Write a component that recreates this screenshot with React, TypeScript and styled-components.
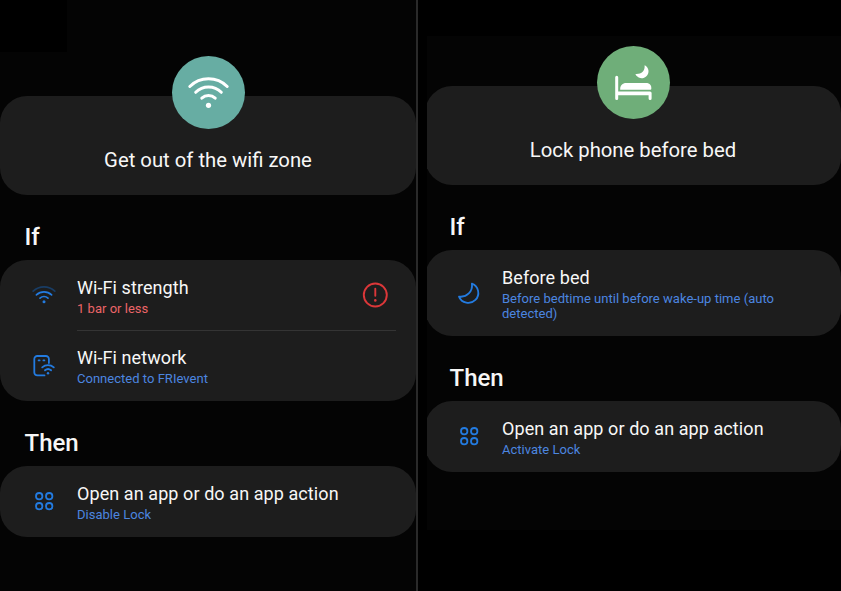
import React from "react";
import styled, { createGlobalStyle } from "styled-components";

const GlobalStyle = createGlobalStyle`
  * { box-sizing: border-box; }
  body { margin: 0; background: #000; }
  h1, h2, h3, p { margin: 0; font-weight: 400; }
`;

const Page = styled.main`
  display: flex;
  width: 841px;
  height: 591px;
  overflow: hidden;
  background: #000;
  color: #f7f7f7;
  font-family: Roboto, "Liberation Sans", sans-serif;
`;

const LeftScreen = styled.section`
  position: relative;
  width: 416px;
  height: 591px;
  padding-top: 96px;
  background: #040404;
`;

const CornerPatch = styled.div`
  position: absolute;
  top: 0;
  left: 0;
  width: 67px;
  height: 52px;
  background: #000;
`;

const Divider = styled.div`
  width: 2px;
  background: #2a2a2a;
`;

const RightScreen = styled.section`
  width: 414px;
  height: 494px;
  margin: 36px 0 0 9px;
  padding-top: 50px;
  overflow: hidden;
  background: #040404;
`;

const Content = styled.div<{ $shift?: number }>`
  width: 416px;
  margin-left: ${(p) => p.$shift ?? 0}px;
`;

const Card = styled.div`
  border-radius: 27px;
  background: #1d1d1d;
`;

const HeroCard = styled(Card)`
  position: relative;
  height: 99px;
  padding-top: 50px;
  text-align: center;
`;

const Badge = styled.div<{ $color: string }>`
  position: absolute;
  top: -40px;
  left: 171.5px;
  width: 73px;
  height: 73px;
  border-radius: 50%;
  background: ${(p) => p.$color};
  svg { display: block; }
`;

const HeroTitle = styled.h1`
  font-size: 20.3px;
  line-height: 28px;
`;

const SectionTitle = styled.h2`
  height: 65px;
  padding: 27px 0 0 24.5px;
  font-size: 24px;
  font-weight: 500;
  line-height: 30px;
`;

const Row = styled.div`
  display: grid;
  grid-template-columns: 77px 1fr 61px;
  min-height: 70.5px;
  padding: 15.5px 0 14.5px;
`;

const Separator = styled.div`
  height: 1px;
  margin: -1px 20px 0 77px;
  background: #343434;
`;

const IconSlot = styled.div`
  display: flex;
  align-items: center;
  justify-content: center;
  padding: 0 0 1px 11px;
  svg { display: block; margin: -6px 0; }
`;

const Alert = styled.div`
  display: flex;
  align-items: center;
  margin-left: 7px;
  padding-bottom: 2px;
  svg { display: block; }
`;

const RowTitle = styled.h3`
  font-size: 18px;
  line-height: 24px;
  letter-spacing: 0.08px;
  white-space: nowrap;
`;

const RowNote = styled.p<{ $tone?: "red" | "blue" }>`
  margin-top: 1px;
  color: ${(p) => (p.$tone === "red" ? "#ec6568" : "#4c86e0")};
  font-size: 13px;
  line-height: 15.5px;
  letter-spacing: 0.02px;
`;

const BLUE = "#237be0";

const WifiBadgeIcon = () => (
  <svg width="73" height="73" viewBox="0 0 73 73" fill="none" stroke="#fff" strokeWidth="3" strokeLinecap="round">
    <path d="M17.8 30.5a26.5 26.5 0 0 1 37.4 0" />
    <path d="M23.7 36.3a18 18 0 0 1 25.6 0" />
    <path d="M29.8 42.2a9.8 9.8 0 0 1 13.4 0" />
    <circle cx="36.5" cy="49.3" r="2.6" fill="#fff" stroke="none" />
  </svg>
);

const BedBadgeIcon = () => (
  <svg width="73" height="73" viewBox="0 0 73 73" fill="#fff">
    <path d="M18.2 31.3a1.5 1.5 0 0 1 3 0V45.5H53a1.6 1.6 0 0 1 1.6 1.6v5.3a1.5 1.5 0 0 1-3 0V49.3H21.2v3.1a1.5 1.5 0 0 1-3 0Z" />
    <path d="M23.2 43.7v-.9c0-3.3 2.3-5.8 6-5.8H49c3.1 0 5.3 2 5.3 4.7v1.1c0 .6-.3.9-.9.9Z" />
    <path d="M47.6 19.2a6.8 6.8 0 1 1-9.2 8.7c5.8.5 9.8-2.9 9.2-8.7Z" />
  </svg>
);

const WifiLevelIcon = () => (
  <svg width="24" height="24" viewBox="0 0 24 24" fill="none" stroke={BLUE} strokeWidth="1.7" strokeLinecap="round">
    <path d="M1.2 8.2a15.7 15.7 0 0 1 21.6 0" stroke="#193d65" />
    <path d="M4.4 11.8a11.2 11.2 0 0 1 15.2 0" />
    <path d="M8 15.1a6.2 6.2 0 0 1 8 0" />
    <circle cx="12" cy="18.8" r="1.5" fill={BLUE} stroke="none" />
  </svg>
);

const WifiDeviceIcon = () => (
  <svg width="24" height="24" viewBox="0 0 24 24" fill="none" stroke={BLUE} strokeWidth="1.8" strokeLinecap="round">
    <path d="M12.5 21.4H5.3a3 3 0 0 1-3-3V5a3 3 0 0 1 3-3h8.6a3 3 0 0 1 3 3v4" />
    <path d="M6.6 6.4h1M11.4 6.4h1" />
    <path d="M10.2 13.3c3.3-3 8.3-3 11.6 0M13 16.3c1.8-1.5 4.3-1.5 6.1 0" />
    <circle cx="16" cy="19.3" r="1.2" fill={BLUE} stroke="none" />
  </svg>
);

const MoonIcon = () => (
  <svg width="24" height="24" viewBox="0 0 24 24" fill="none" stroke={BLUE} strokeWidth="1.8" strokeLinejoin="round">
    <path d="M14.9 2.6A10 10 0 1 1 2 15.6C9.8 16.7 16 10.5 14.9 2.6Z" />
  </svg>
);

const AppsIcon = () => (
  <svg width="24" height="24" viewBox="0 0 24 24" fill="none" stroke={BLUE} strokeWidth="1.8">
    <circle cx="7.2" cy="7.2" r="3.2" />
    <circle cx="17.2" cy="7.2" r="3.2" />
    <circle cx="7.2" cy="17.2" r="3.2" />
    <circle cx="17.2" cy="17.2" r="3.2" />
  </svg>
);

const AlertIcon = () => (
  <svg width="26" height="26" viewBox="0 0 26 26" fill="none" stroke="#dc3739" strokeWidth="1.9" strokeLinecap="round">
    <circle cx="13.3" cy="13" r="11.5" />
    <path d="M13.3 6.8v7" />
    <circle cx="13.3" cy="18.4" r="1.3" fill="#dc3739" stroke="none" />
  </svg>
);

interface RuleRowProps {
  icon: React.ReactNode;
  title: string;
  note: string;
  tone?: "red" | "blue";
  alert?: boolean;
}

const RuleRow = ({ icon, title, note, tone, alert }: RuleRowProps) => (
  <Row>
    <IconSlot>{icon}</IconSlot>
    <div>
      <RowTitle>{title}</RowTitle>
      <RowNote $tone={tone}>{note}</RowNote>
    </div>
    {alert && <Alert><AlertIcon /></Alert>}
  </Row>
);

export default function App() {
  return (
    <>
      <GlobalStyle />
      <Page>
        <LeftScreen>
          <CornerPatch />
          <Content>
            <HeroCard>
              <Badge $color="#67ada3"><WifiBadgeIcon /></Badge>
              <HeroTitle>Get out of the wifi zone</HeroTitle>
            </HeroCard>
            <SectionTitle>If</SectionTitle>
            <Card>
              <RuleRow icon={<WifiLevelIcon />} title="Wi-Fi strength" note="1 bar or less" tone="red" alert />
              <Separator />
              <RuleRow icon={<WifiDeviceIcon />} title="Wi-Fi network" note="Connected to FRIevent" />
            </Card>
            <SectionTitle>Then</SectionTitle>
            <Card>
              <RuleRow icon={<AppsIcon />} title="Open an app or do an app action" note="Disable Lock" />
            </Card>
          </Content>
        </LeftScreen>
        <Divider />
        <RightScreen>
          <Content $shift={-2}>
            <HeroCard>
              <Badge $color="#6fae79"><BedBadgeIcon /></Badge>
              <HeroTitle>Lock phone before bed</HeroTitle>
            </HeroCard>
            <SectionTitle>If</SectionTitle>
            <Card>
              <RuleRow
                icon={<MoonIcon />}
                title="Before bed"
                note="Before bedtime until before wake-up time (auto detected)"
              />
            </Card>
            <SectionTitle>Then</SectionTitle>
            <Card>
              <RuleRow icon={<AppsIcon />} title="Open an app or do an app action" note="Activate Lock" />
            </Card>
          </Content>
        </RightScreen>
      </Page>
    </>
  );
}
